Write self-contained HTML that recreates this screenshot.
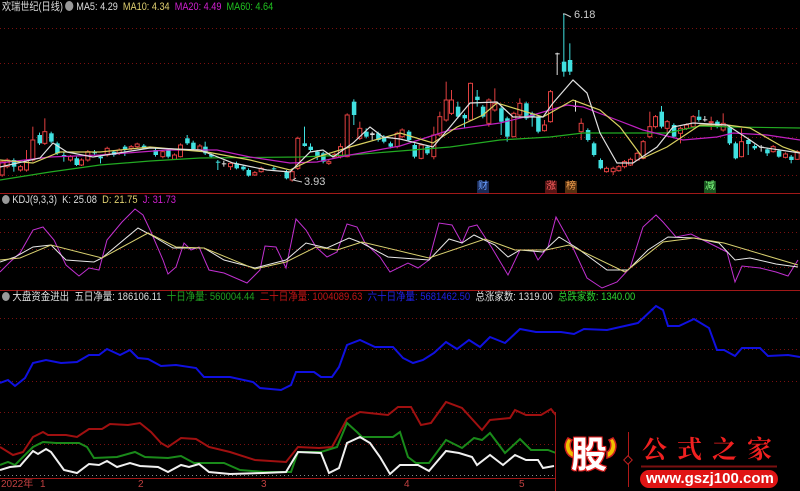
<!DOCTYPE html>
<html><head><meta charset="utf-8"><style>
html,body{margin:0;padding:0;background:#000;width:800px;height:491px;overflow:hidden}
.t{position:absolute;font-family:"Liberation Sans","Noto Sans CJK SC",sans-serif;font-size:11px;white-space:nowrap;line-height:13px}
</style></head><body>
<svg id="s" width="800" height="491" style="position:absolute;left:0;top:0" xmlns="http://www.w3.org/2000/svg">
<g stroke="#7a1010" stroke-dasharray="1,3" stroke-width="1">
<line x1="0" x2="800" y1="28.5" y2="28.5"/><line x1="0" x2="800" y1="63.5" y2="63.5"/><line x1="0" x2="800" y1="102.5" y2="102.5"/><line x1="0" x2="800" y1="137.5" y2="137.5"/><line x1="0" x2="800" y1="175.5" y2="175.5"/>
<line x1="0" x2="800" y1="219.5" y2="219.5"/><line x1="0" x2="800" y1="232.5" y2="232.5"/><line x1="0" x2="800" y1="249.5" y2="249.5"/><line x1="0" x2="800" y1="267.5" y2="267.5"/>
<line x1="0" x2="800" y1="318.5" y2="318.5"/><line x1="0" x2="800" y1="349.5" y2="349.5"/><line x1="0" x2="800" y1="381.5" y2="381.5"/><line x1="0" x2="800" y1="412.5" y2="412.5"/><line x1="0" x2="800" y1="444.5" y2="444.5"/>
</g>
<line x1="0" x2="560" y1="475.5" y2="475.5" stroke="#888" stroke-dasharray="1,3"/>
<line x1="0" x2="800" y1="193.5" y2="193.5" stroke="#a01818"/>
<line x1="0" x2="800" y1="290.5" y2="290.5" stroke="#a01818"/>
<line x1="0" x2="555" y1="478.5" y2="478.5" stroke="#a01818"/>
<g id="candles"></g>
<g fill="none" stroke-width="1.2">
<polyline stroke="#22aa22" points="0,180 50,172 100,165 150,161 200,158 300,157 350,155 400,151 450,147 500,140 550,137 583,133 667,133 700,126 733,127 800,128"/>
<polyline stroke="#c020c0" points="0,163 50,157 100,155 167,150 217,150 250,157 290,163 317,162 350,155 400,146 450,130 500,123 533,115 567,105 583,107 617,120 643,130 683,140 717,137 733,133 767,135 800,140"/>
<polyline stroke="#d8d060" points="0,160 33,163 60,152 100,152 150,147 207,152 250,160 290,170 317,157 350,147 400,133 433,143 457,127 483,115 497,103 543,117 573,100 600,110 620,127 643,158 667,147 700,125 727,125 750,128 783,147 800,153"/>
<polyline stroke="#e0e0e0" points="0,167 40,158 53,143 67,152 93,157 150,148 200,150 233,163 267,170 290,172 310,152 323,150 333,157 353,143 370,127 383,137 400,139 433,147 450,127 470,103 497,102 513,117 543,117 553,103 573,80 587,93 600,133 617,163 633,163 657,147 673,127 693,123 727,125 750,140 760,147 800,153"/>
</g>
<g fill="none" stroke-width="1">
<polyline stroke="#c030d0" points="0,272 10,262 20,253 33,230 43,227 54,240 66,265 79,276 89,268 99,270 107,240 122,222 135,209 143,215 151,232 163,260 168,274 176,267 184,243 191,250 199,247 209,270 224,273 247,283 260,270 265,246 276,247 286,268 296,219 306,230 316,247 327,257 337,252 347,224 357,227 365,243 380,257 390,272 408,263 418,268 429,260 439,223 452,225 462,243 469,227 477,225 492,248 508,275 520,250 533,250 538,260 548,247 556,217 566,235 574,250 587,278 602,288 617,282 630,268 643,227 656,215 663,222 676,237 691,234 707,242 719,248 727,252 735,282 742,266 760,268 776,272 788,276 798,260"/>
<polyline stroke="#e8e8e8" points="0,262 15,257 33,247 51,245 66,260 94,262 102,258 138,228 151,235 173,248 204,248 224,260 255,268 286,260 306,243 327,248 349,238 362,243 388,257 429,260 449,239 462,243 474,235 495,245 508,257 520,250 543,252 559,237 577,248 607,270 628,270 648,250 668,237 694,238 719,243 735,260 750,258 776,264 798,267"/>
<polyline stroke="#d8d070" points="0,260 20,258 51,245 102,258 148,233 176,247 204,248 255,269 286,262 316,247 337,250 362,242 429,258 485,239 515,250 546,250 569,245 625,272 663,242 694,238 724,243 798,265"/>
</g>
<g fill="none" stroke-width="2">
<polyline stroke="#1010e0" points="0,383 8,380 15,386 25,378 33,363 46,360 61,363 77,362 89,355 99,355 107,349 120,355 130,350 138,358 148,359 161,366 176,365 196,368 204,377 230,377 253,382 260,388 281,390 291,385 296,372 314,372 321,377 332,377 339,367 347,345 360,340 375,347 393,347 403,358 413,363 423,360 434,353 446,342 457,349 469,340 480,347 490,337 505,343 520,329 536,332 561,332 574,334 584,329 607,330 638,323 656,306 663,310 668,326 679,326 694,319 709,328 717,350 724,350 735,356 742,348 760,348 768,356 788,355 800,357"/>
<polyline stroke="#a01010" points="0,447 13,455 23,452 33,437 43,432 48,435 66,435 77,437 89,429 102,429 110,424 128,425 140,423 151,432 161,443 168,447 181,438 196,439 209,447 230,452 255,460 286,462 298,447 319,448 332,447 347,419 360,412 388,415 398,407 411,407 421,425 431,423 446,402 462,408 482,430 490,420 510,418 515,410 526,415 541,415 551,409 566,428 582,428"/>
<polyline stroke="#1a8a1a" points="0,465 8,462 15,465 33,447 43,442 56,443 79,443 87,447 94,458 117,457 135,452 145,457 168,458 181,456 194,463 224,463 240,470 265,472 291,472 298,452 321,452 337,447 347,423 357,432 362,437 393,437 400,432 408,457 416,463 429,463 446,440 462,448 474,438 482,440 490,433 505,453 520,439 531,450 548,450 556,453"/>
<polyline stroke="#f0f0f0" points="0,470 10,467 20,466 33,451 38,454 46,449 51,452 64,470 77,473 89,464 99,465 107,461 117,467 130,463 140,466 158,467 168,472 181,465 189,467 199,464 209,472 230,474 263,473 286,472 298,452 321,453 329,473 339,468 347,443 360,437 370,443 380,457 390,474 400,465 418,465 429,471 446,451 459,453 472,457 477,465 490,455 503,465 515,455 526,460 538,460 543,468 554,466"/>
</g>
<rect x="556" y="412" width="244" height="79" fill="#000"/>
<line x1="555.5" y1="412" x2="555.5" y2="491" stroke="#a01818"/>
<path d="M568,438 C562,446 566,456 574,458 L574,452 C570,450 569,444 572,440Z" fill="#f0c000" stroke="#d02020" stroke-width="1.5"/>
<path d="M613,438 C619,446 615,456 607,458 L607,452 C611,450 612,444 609,440Z" fill="#f0c000" stroke="#d02020" stroke-width="1.5"/>
<line x1="628.5" y1="432" x2="628.5" y2="487" stroke="#b01818"/>
<rect x="625" y="457" width="6" height="6" transform="rotate(45 628 460)" fill="#000" stroke="#c02020"/>
<line x1="641" y1="466.5" x2="777" y2="466.5" stroke="#7a1010" stroke-width="2"/>
<rect x="640" y="470" width="138" height="18" rx="9" fill="#e01515"/>
</svg>
<div class="t" style="left:2px;top:1px;color:#ddd;transform:scaleX(0.83);transform-origin:0 0">欢瑞世纪(日线) <span style="display:inline-block;width:10px;height:10px;border-radius:5px;background:#999;vertical-align:-1px"></span>&nbsp;MA5: 4.29&nbsp; <span style="color:#e0d070">MA10: 4.34</span>&nbsp; <span style="color:#d020d0">MA20: 4.49</span>&nbsp; <span style="color:#20c020">MA60: 4.64</span></div>
<div class="t" style="left:2px;top:194px;color:#ddd;transform:scaleX(0.85);transform-origin:0 0"><span style="display:inline-block;width:9px;height:9px;border-radius:5px;background:#999;vertical-align:-1px"></span> KDJ(9,3,3)&nbsp; K: 25.08&nbsp; <span style="color:#e0d070">D: 21.75</span>&nbsp; <span style="color:#d020d0">J: 31.73</span></div>
<div class="t" style="left:2px;top:291px;color:#ddd;transform:scaleX(0.86);transform-origin:0 0"><span style="display:inline-block;width:9px;height:9px;border-radius:5px;background:#999;vertical-align:-1px"></span> 大盘资金进出&nbsp; 五日净量: 186106.11&nbsp; <span style="color:#20a020">十日净量: 560004.44</span>&nbsp; <span style="color:#c01515">二十日净量: 1004089.63</span>&nbsp; <span style="color:#2020e0">六十日净量: 5681462.50</span>&nbsp; 总涨家数: 1319.00&nbsp; <span style="color:#30d030">总跌家数: 1340.00</span></div>
<div class="t" style="left:574px;top:9px;color:#ccc">6.18</div>
<div class="t" style="left:304px;top:176px;color:#ccc">3.93</div>
<div class="t" style="left:477px;top:181px;color:#6aa0ff;background:#1a2a55;font-size:10px;line-height:12px;padding:0 1px">财</div>
<div class="t" style="left:545px;top:181px;color:#ff6060;background:#551515;font-size:10px;line-height:12px;padding:0 1px">涨</div>
<div class="t" style="left:565px;top:181px;color:#f0a050;background:#553010;font-size:10px;line-height:12px;padding:0 1px">榜</div>
<div class="t" style="left:704px;top:181px;color:#80ff80;background:#1a5520;font-size:10px;line-height:12px;padding:0 1px">减</div>
<div class="t" style="left:1px;top:479px;color:#c04040;font-size:10px;line-height:12px">2022年</div>
<div class="t" style="left:40px;top:479px;color:#c04040;font-size:10px;line-height:12px">1</div>
<div class="t" style="left:138px;top:479px;color:#c04040;font-size:10px;line-height:12px">2</div>
<div class="t" style="left:261px;top:479px;color:#c04040;font-size:10px;line-height:12px">3</div>
<div class="t" style="left:404px;top:479px;color:#c04040;font-size:10px;line-height:12px">4</div>
<div class="t" style="left:519px;top:479px;color:#c04040;font-size:10px;line-height:12px">5</div>
<div class="t" style="left:571px;top:430px;color:#fff;font-size:36px;line-height:44px;font-weight:bold;font-family:'Noto Sans CJK SC',sans-serif;text-shadow:0 0 2px #e02020,1px 1px 0 #e02020,-1px -1px 0 #e02020,1px -1px 0 #e02020,-1px 1px 0 #e02020">股</div>
<div class="t" style="left:642px;top:433px;color:#f02020;font-size:25px;line-height:30px;letter-spacing:10px;font-family:'Noto Serif CJK SC','Noto Sans CJK SC',serif;font-weight:bold">公式之家</div>
<div class="t" style="left:646px;top:471px;color:#fff;font-size:15px;line-height:16px;font-weight:bold">www.gszj100.com</div>
<script>
var g=document.getElementById('candles'),h='';
function C(x,t,b,wt,wb,c){var col=c=='r'?'#e04040':(c=='w'?'#e0e0e0':'#40e0e0');
h+='<line x1="'+(x+.5)+'" x2="'+(x+.5)+'" y1="'+wt+'" y2="'+wb+'" stroke="'+col+'"/>';
if(b-t<1)b=t+1;
if(c=='r')h+='<rect x="'+(x-1.5)+'" y="'+t+'" width="4" height="'+(b-t)+'" fill="#000" stroke="'+col+'"/>';
else h+='<rect x="'+(x-1.5)+'" y="'+t+'" width="4.5" height="'+(b-t)+'" fill="'+col+'"/>';}
var A=[[5,485,525,480,530,'r'],[20,480,500,475,505,'r'],[40,480,500,475,515,'c'],[60,500,510,495,515,'r'],[78,480,510,450,515,'r'],[97,420,480,380,485,'r'],[117,405,430,398,435,'c'],[133,395,430,355,435,'r'],[152,400,425,395,430,'c'],[170,430,460,425,465,'c'],[190,465,470,455,485,'c'],[210,470,480,465,485,'r'],[228,475,495,470,498,'c'],[243,480,495,475,498,'r'],[262,455,480,450,485,'r'],[282,455,460,450,465,'c'],[300,470,475,465,490,'c'],[320,445,465,440,470,'r'],[340,455,465,450,470,'c'],[356,450,460,445,465,'r'],[373,440,450,435,468,'c'],[392,440,445,435,450,'r'],[410,432,440,428,445,'r'],[430,437,445,432,448,'c'],[465,450,465,445,470,'c'],[487,455,470,450,475,'r'],[503,450,470,445,475,'c'],[522,465,478,460,480,'r'],[540,435,470,430,472,'r'],[560,415,430,405,435,'c'],[578,428,447,422,450,'c'],[598,438,450,432,452,'r'],[614,440,460,425,465,'c'],[632,463,470,458,475,'c'],[652,485,487,480,510,'c'],[670,490,492,482,500,'w'],[690,490,500,485,510,'r'],[708,490,505,485,508,'c'],[728,500,508,495,512,'c'],[744,510,527,505,530,'c'],[763,518,525,513,528,'r'],[782,505,515,500,518,'r'],[820,505,507,500,512,'c'],[858,515,535,510,538,'c'],[875,515,540,510,545,'r'],[892,415,505,410,510,'r'],[912,430,438,380,440,'c'],[930,440,450,430,455,'c'],[950,455,470,450,480,'c'],[968,460,485,455,490,'c'],[985,485,490,480,495,'r'],[1003,463,470,458,475,'r'],[1020,440,470,430,475,'r'],[1040,345,470,340,472,'r'],[1060,305,345,298,375,'c'],[1078,385,415,365,420,'r'],[1097,395,410,385,415,'c'],[1115,400,405,395,420,'w'],[1133,400,420,395,425,'c'],[1150,410,425,405,430,'c'],[1170,430,440,425,445,'c'],[1190,400,440,395,445,'r']];
A.forEach(function(a){C(a[0]/3,a[1]/3,a[2]/3,a[3]/3,a[4]/3,a[5]);});
var B=[[5,390,410,385,415,'r'],[25,395,420,390,425,'c'],[42,435,470,430,475,'c'],[62,435,475,430,478,'r'],[80,440,460,435,465,'c'],[100,405,470,380,478,'r'],[118,350,405,335,410,'r'],[137,300,360,245,365,'r'],[153,300,340,270,345,'r'],[172,320,350,305,355,'c'],[192,345,355,340,385,'c'],[210,250,360,248,362,'r'],[230,290,300,270,320,'c'],[247,320,350,315,355,'c'],[265,300,370,295,380,'r'],[283,310,330,265,335,'r'],[302,325,365,320,405,'c'],[320,355,410,350,425,'c'],[340,340,410,335,412,'r'],[358,310,345,295,350,'r'],[377,310,355,305,360,'c'],[395,340,350,335,380,'c'],[413,350,395,345,400,'c'],[432,375,392,360,395,'r'],[450,275,365,270,368,'r'],[470,160,162,158,225,'w'],[490,185,215,40,230,'c'],[508,180,215,130,225,'c'],[525,318,320,300,335,'w'],[542,370,395,355,420,'r'],[562,390,420,385,425,'c'],[580,430,465,425,470,'c'],[600,480,505,475,508,'c'],[618,505,515,500,518,'r'],[638,505,515,500,525,'r'],[655,500,512,495,515,'r'],[672,485,500,480,505,'r'],[690,478,495,473,498,'r'],[710,460,480,455,482,'r'],[728,425,475,420,478,'r'],[748,380,410,335,415,'r'],[765,350,380,345,385,'r'],[783,335,380,318,385,'c'],[800,365,385,360,405,'r'],[820,375,410,370,415,'c'],[840,385,400,380,430,'r'],[858,375,385,370,390,'r'],[878,350,380,345,385,'r'],[895,350,360,330,365,'c'],[913,358,360,348,365,'w'],[932,365,367,350,390,'r'],[950,365,380,360,385,'c'],[968,370,390,340,395,'r'],[987,380,430,375,435,'c'],[1005,430,475,425,478,'c'],[1023,425,470,385,472,'r'],[1043,420,432,415,465,'c'],[1062,438,445,433,450,'c'],[1082,440,442,435,455,'w'],[1100,448,460,443,468,'c'],[1118,440,455,435,458,'r'],[1135,452,470,447,473,'c'],[1155,462,472,457,475,'r'],[1172,470,480,465,490,'c'],[1190,455,478,450,480,'r']];
B.forEach(function(a){C(400+a[0]/3,a[1]/3,a[2]/3,a[3]/3,a[4]/3,a[5]);});
h+='<polyline points="571,17 565,14 563,14" fill="none" stroke="#ccc"/><polyline points="302,182 293,180 296,178 M293,180 296,182" fill="none" stroke="#ccc"/>';
g.innerHTML=h;
</script>
</body></html>
